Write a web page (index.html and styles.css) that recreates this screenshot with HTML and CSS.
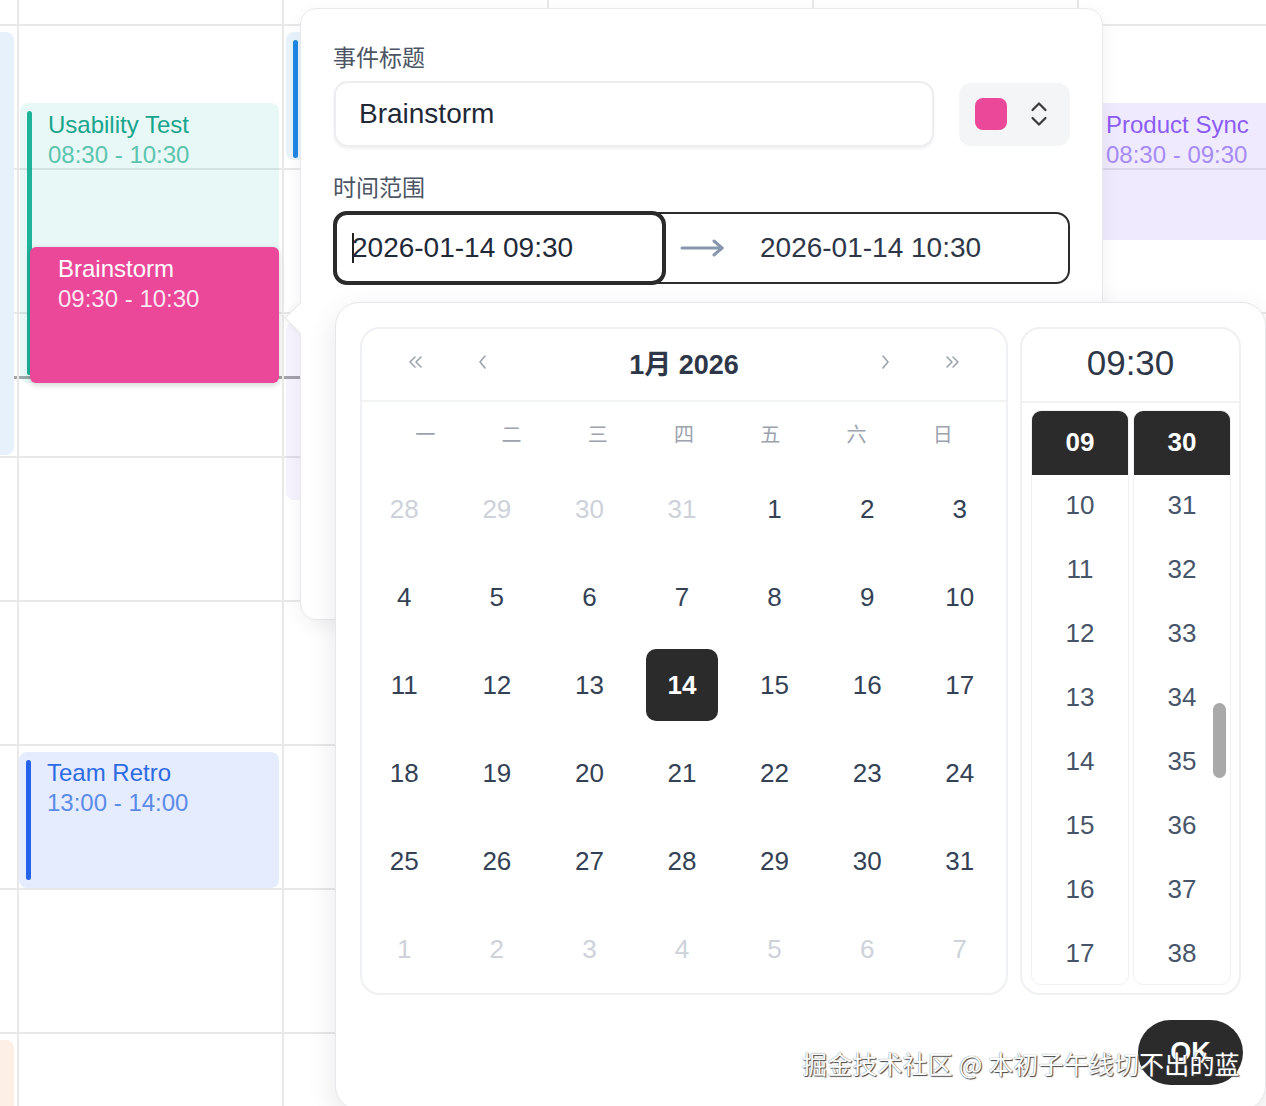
FILE: index.html
```html
<!DOCTYPE html>
<html lang="zh-CN">
<head>
<meta charset="utf-8">
<title>Calendar</title>
<link rel="stylesheet" href="styles.css">
</head>
<body>
<div class="week">
  <div class="now-line"></div>
  <div class="day day-first">
    <div class="event ev-sky ev-nobar" style="top:32px;height:423px"></div>
    <div class="event ev-peach ev-nobar" style="top:1040px;height:100px"></div>
  </div>
  <div class="day">
    <div class="event ev-teal" style="top:103px;height:280px;left:1px;right:3px">
      <div class="ev-title">Usability Test</div>
      <div class="ev-time">08:30 - 10:30</div>
    </div>
    <div class="event ev-pink" style="top:247px;height:136px;left:11px;right:3px">
      <div class="ev-title">Brainstorm</div>
      <div class="ev-time">09:30 - 10:30</div>
    </div>
    <div class="event ev-blue" style="top:752px;height:136px;left:0;right:3px">
      <div class="ev-title">Team Retro</div>
      <div class="ev-time">13:00 - 14:00</div>
    </div>
  </div>
  <div class="day">
    <div class="event ev-azure" style="top:32px;height:128px;left:2px;right:3px"></div>
    <div class="event ev-lilac ev-nobar" style="top:322px;height:178px;left:2px;right:3px"></div>
  </div>
  <div class="day"></div>
  <div class="day"></div>
  <div class="day">
    <div class="event ev-violet" style="top:103px;height:137px;left:0;right:3px">
      <div class="ev-title">Product Sync</div>
      <div class="ev-time">08:30 - 09:30</div>
    </div>
  </div>
</div>

<div class="editor">
  <div class="editor-arrow"></div>
  <div class="field-label">事件标题</div>
  <div class="title-row">
    <div class="title-input">Brainstorm</div>
    <div class="color-btn">
      <span class="swatch"></span>
      <svg class="updown" width="18" height="28" viewBox="0 0 18 28"><polyline points="2.5,10 9,3.5 15.5,10" fill="none" stroke="#3a3a3a" stroke-width="2.2" stroke-linecap="round" stroke-linejoin="round"/><polyline points="2.5,18 9,24.5 15.5,18" fill="none" stroke="#3a3a3a" stroke-width="2.2" stroke-linecap="round" stroke-linejoin="round"/></svg>
    </div>
  </div>
  <div class="field-label label-range">时间范围</div>
  <div class="range">
    <div class="range-start"><span class="caret"></span>2026-01-14 09:30</div>
    <svg class="range-arrow" width="46" height="24" viewBox="0 0 46 24"><line x1="2" y1="12" x2="42" y2="12" stroke="#8797ae" stroke-width="3" stroke-linecap="round"/><polyline points="34,5 42,12 34,19" fill="none" stroke="#8797ae" stroke-width="3" stroke-linecap="round" stroke-linejoin="round"/></svg>
    <div class="range-end">2026-01-14 10:30</div>
  </div>
</div>

<div class="picker">
  <div class="panels">
    <div class="cal">
      <div class="cal-head">
        <span class="nav"><svg width="16" height="16" viewBox="0 0 16 16"><polyline points="8,3 3,8 8,13" fill="none" stroke="#9ca3af" stroke-width="1.6" stroke-linecap="round" stroke-linejoin="round"/><polyline points="14,3 9,8 14,13" fill="none" stroke="#9ca3af" stroke-width="1.6" stroke-linecap="round" stroke-linejoin="round"/></svg></span>
        <span class="nav"><svg width="10" height="16" viewBox="0 0 10 16"><polyline points="7,2 2,8 7,14" fill="none" stroke="#9ca3af" stroke-width="1.6" stroke-linecap="round" stroke-linejoin="round"/></svg></span>
        <span class="cal-title">1月 2026</span>
        <span class="nav"><svg width="10" height="16" viewBox="0 0 10 16"><polyline points="3,2 8,8 3,14" fill="none" stroke="#9ca3af" stroke-width="1.6" stroke-linecap="round" stroke-linejoin="round"/></svg></span>
        <span class="nav"><svg width="16" height="16" viewBox="0 0 16 16"><polyline points="2,3 7,8 2,13" fill="none" stroke="#9ca3af" stroke-width="1.6" stroke-linecap="round" stroke-linejoin="round"/><polyline points="8,3 13,8 8,13" fill="none" stroke="#9ca3af" stroke-width="1.6" stroke-linecap="round" stroke-linejoin="round"/></svg></span>
      </div>
      <div class="weekdays">
        <span>一</span><span>二</span><span>三</span><span>四</span><span>五</span><span>六</span><span>日</span>
      </div>
      <div class="dates">
        <span class="muted">28</span><span class="muted">29</span><span class="muted">30</span><span class="muted">31</span><span>1</span><span>2</span><span>3</span>
        <span>4</span><span>5</span><span>6</span><span>7</span><span>8</span><span>9</span><span>10</span>
        <span>11</span><span>12</span><span>13</span><span class="selected"><b>14</b></span><span>15</span><span>16</span><span>17</span>
        <span>18</span><span>19</span><span>20</span><span>21</span><span>22</span><span>23</span><span>24</span>
        <span>25</span><span>26</span><span>27</span><span>28</span><span>29</span><span>30</span><span>31</span>
        <span class="muted">1</span><span class="muted">2</span><span class="muted">3</span><span class="muted">4</span><span class="muted">5</span><span class="muted">6</span><span class="muted">7</span>
      </div>
    </div>
    <div class="time">
      <div class="time-head">09:30</div>
      <div class="time-cols">
        <div class="tcol">
          <span class="tsel">09</span><span>10</span><span>11</span><span>12</span><span>13</span><span>14</span><span>15</span><span>16</span><span>17</span>
        </div>
        <div class="tcol">
          <span class="tsel">30</span><span>31</span><span>32</span><span>33</span><span>34</span><span>35</span><span>36</span><span>37</span><span>38</span>
          <div class="thumb"></div>
        </div>
      </div>
    </div>
  </div>
  <div class="picker-foot"><button class="ok">OK</button></div>
</div>

<div class="watermark">掘金技术社区 @ 本初子午线切不出的蓝</div>
</body>
</html>
```

FILE: styles.css
```css
* { box-sizing: border-box; margin: 0; padding: 0; }
html, body { width: 1266px; height: 1106px; overflow: hidden; }
body {
  position: relative;
  background: #fff;
  font-family: "Liberation Sans", "Noto Sans CJK SC", sans-serif;
  color: #1f2937;
}

/* background week grid */
.week { display: flex; height: 1106px; position: relative; overflow: hidden; }
.now-line { position: absolute; left: 0; right: 0; top: 376px; height: 3px; background: #a6a6a6; }
.day {
  position: relative;
  flex: 0 0 265px;
  border-left: 2px solid #e8e8e8;
  background: repeating-linear-gradient(to bottom, transparent 0 24px, #e8e8e8 24px 26px, transparent 26px 144px);
}
.day-first { flex-basis: 17px; border-left: 0; overflow: hidden; }

.event {
  position: absolute;
  border-radius: 8px;
  padding: 7px 10px 0 28px;
  font-size: 24px;
  line-height: 30px;
  white-space: nowrap;
  overflow: hidden;
}
.event::before {
  content: "";
  position: absolute;
  left: 7px; top: 8px; bottom: 8px;
  width: 5px;
  border-radius: 3px;
}
.ev-nobar::before { display: none; }
.ev-sky { left: -100px; right: 3px; background: #e7f1fc; border-radius: 8px; }
.ev-peach { left: -100px; right: 3px; background: #fdeee6; }
.ev-teal { background: rgba(20, 184, 166, 0.1); color: #17a58c; }
.ev-teal::before { background: #1db49a; }
.ev-teal .ev-time { color: #5cc4ae; }
.ev-pink { background: #ec4899; color: #fff; border-radius: 6px; box-shadow: 0 2px 6px rgba(0,0,0,0.18); }
.ev-pink::before { display: none; }
.ev-pink .ev-time { color: rgba(255,255,255,0.88); }
.ev-blue { background: rgba(37, 99, 235, 0.12); color: #2d6be4; padding-top: 6px; }
.ev-blue::before { background: #2563eb; }
.ev-blue .ev-time { color: #5b8be9; }
.ev-azure { background: rgba(30, 136, 229, 0.1); }
.ev-azure::before { background: #1e88e5; bottom: 2px; }
.ev-lilac { background: rgba(139, 92, 246, 0.08); }
.ev-violet { background: rgba(139, 92, 246, 0.13); color: #8b5cf6; padding-left: 27px; }
.ev-violet::before { background: #8b5cf6; }
.ev-violet .ev-time { color: #a68af5; }

/* event editor popover */
.editor {
  position: absolute;
  left: 300px; top: 8px;
  width: 803px; height: 612px;
  background: #fff;
  border: 1px solid #e8e9ec;
  border-radius: 16px;
  box-shadow: 0 6px 20px rgba(0,0,0,0.06);
  padding: 30px 32px 0 33px;
}
.editor-arrow {
  position: absolute;
  left: -12px; top: 298px;
  width: 22px; height: 22px;
  background: #fff;
  border-left: 1px solid #e6e7ea;
  border-bottom: 1px solid #e6e7ea;
  transform: rotate(45deg);
  box-shadow: -2px 2px 4px rgba(0,0,0,0.03);
}
.field-label {
  font-family: "Noto Sans CJK SC", "Liberation Sans", sans-serif;
  font-size: 23px;
  line-height: 34px;
  color: #4b5563;
  margin-bottom: 8px;
  margin-left: -1px;
}
.label-range { margin-top: 22px; margin-bottom: 9px; }
.title-row { display: flex; align-items: center; gap: 25px; }
.title-input {
  width: 600px; height: 66px;
  border: 2px solid #ececf1;
  border-radius: 14px;
  box-shadow: 0 2px 3px rgba(0,0,0,0.06);
  padding-left: 23px;
  display: flex; align-items: center;
  font-size: 28px;
  color: #1f2937;
}
.color-btn {
  width: 111px; height: 63px;
  background: #f4f5f7;
  border-radius: 12px;
  display: flex; align-items: center;
  padding-left: 16px;
  gap: 23px;
}
.swatch { width: 32px; height: 32px; border-radius: 8px; background: #ec4899; }

.range {
  width: 736px; height: 72px;
  border: 2px solid #2b2b2b;
  border-radius: 14px;
  display: flex; align-items: center;
}
.range-start {
  align-self: stretch;
  margin: -3px 0 -3px -3px;
  width: 333px;
  border: 4px solid #2b2b2b;
  border-radius: 14px;
  padding-left: 15px;
  display: flex; align-items: center;
  font-size: 28px;
  color: #1f2937;
}
.caret { display: inline-block; width: 2px; height: 30px; background: #222; margin-right: -2px; }
.range-arrow { margin-left: 14px; }
.range-end { margin-left: 34px; font-size: 28px; color: #2d3748; }

/* date time picker dropdown */
.picker {
  position: absolute;
  left: 335px; top: 302px;
  width: 931px; height: 808px;
  background: #fff;
  border: 1px solid #e6e7ea;
  border-radius: 24px;
  box-shadow: 0 10px 30px rgba(0,0,0,0.1);
  padding: 24px;
}
.panels { display: flex; gap: 12px; }
.cal {
  width: 648px; height: 668px;
  border: 2px solid #eef0f3;
  border-radius: 20px;
  display: flex; flex-direction: column;
}
.cal-head {
  height: 74px;
  border-bottom: 2px solid #f1f2f4;
  display: flex; align-items: center;
  padding: 0 28px 5px;
  gap: 18px;
}
.nav { width: 50px; display: flex; justify-content: center; align-items: center; }
.cal-title {
  flex: 1;
  text-align: center;
  font-weight: 700;
  font-size: 27px;
  color: #2d3748;
}
.weekdays {
  height: 63px;
  padding: 0 20px;
  display: grid;
  grid-template-columns: repeat(7, 1fr);
  align-items: center;
  font-family: "Noto Sans CJK SC", sans-serif;
  font-size: 20px;
  color: #9ca3af;
  text-align: center;
}
.dates {
  margin-left: -4px;
  display: grid;
  grid-template-columns: repeat(7, 1fr);
  grid-auto-rows: 88px;
  font-size: 26px;
  color: #334155;
}
.dates span { display: flex; align-items: center; justify-content: center; }
.dates .muted { color: #cdd2da; }
.dates .selected b {
  width: 72px; height: 72px;
  border-radius: 10px;
  background: #2b2b2b;
  color: #fff;
  display: flex; align-items: center; justify-content: center;
}

.time {
  width: 221px; height: 668px;
  border: 2px solid #eef0f3;
  border-radius: 20px;
}
.time-head {
  height: 74px;
  border-bottom: 2px solid #f1f2f4;
  padding-bottom: 4px;
  display: flex; align-items: center; justify-content: center;
  font-size: 35px;
  color: #2d3748;
}
.time-cols { display: flex; gap: 4px; padding: 7px 8px 0 9px; }
.tcol {
  position: relative;
  width: 98px; height: 575px;
  border: 1px solid #eff0f2;
  border-radius: 10px;
  overflow: hidden;
  display: flex; flex-direction: column;
}
.tcol span {
  flex: 0 0 64px;
  display: flex; align-items: center; justify-content: center;
  padding-bottom: 3px;
  font-size: 26px;
  color: #475569;
}
.tcol .tsel { background: #2b2b2b; color: #fff; font-weight: 700; padding-bottom: 1px; }
.thumb {
  position: absolute;
  right: 4px; top: 292px;
  width: 13px; height: 75px;
  border-radius: 7px;
  background: #a9a9a9;
}

.picker-foot { display: flex; justify-content: flex-end; margin-top: 25px; margin-right: -2px; }
.ok {
  width: 105px; height: 65px;
  border: 0;
  border-radius: 33px;
  background: #2b2b2b;
  color: #fff;
  font-family: "Liberation Sans", sans-serif;
  font-weight: 700;
  font-size: 27px;
}

.watermark {
  position: absolute;
  left: 802px; top: 1048px;
  font-family: "Noto Sans CJK SC", sans-serif;
  font-size: 25px;
  line-height: 30px;
  white-space: nowrap;
  color: #fff;
  text-shadow: 0 0 1px #555, 1px 1px 1px #444;
  letter-spacing: 0.15px;
}
```
